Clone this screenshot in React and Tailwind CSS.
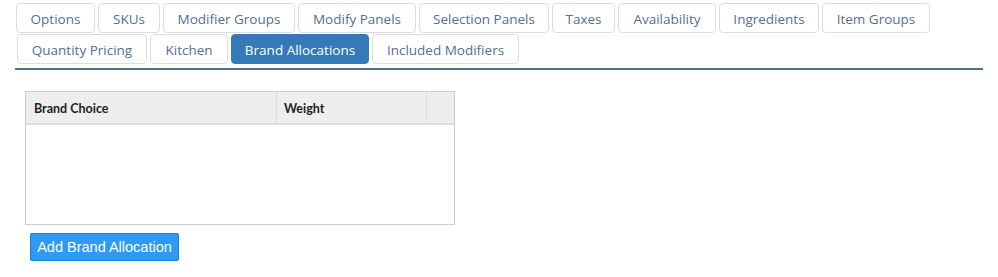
const rowOne = [
  { label: 'Options', w: 'w-[79px]' },
  { label: 'SKUs', w: 'w-[62px]' },
  { label: 'Modifier Groups', w: 'w-[132px]' },
  { label: 'Modify Panels', w: 'w-[118px]' },
  { label: 'Selection Panels', w: 'w-[130px]' },
  { label: 'Taxes', w: 'w-[63px]' },
  { label: 'Availability', w: 'w-[98px]' },
  { label: 'Ingredients', w: 'w-[100px]' },
  { label: 'Item Groups', w: 'w-[108px]' },
];

const rowTwo = [
  { label: 'Quantity Pricing', w: 'w-[130px]' },
  { label: 'Kitchen', w: 'w-[78px]' },
  { label: 'Brand Allocations', w: 'w-[138px]', active: true },
  { label: 'Included Modifiers', w: 'w-[147px]' },
];

function Tab({ tab }) {
  return (
    <div
      className={`${tab.w} h-[30px] pt-[2px] flex items-center justify-center rounded-[4px] border text-[13.5px] whitespace-nowrap ${
        tab.active
          ? 'bg-[#337ab7] border-[#337ab7] text-white'
          : 'bg-white border-[#dddddd] text-[#53708d]'
      }`}
    >
      {tab.label}
    </div>
  );
}

export default function App() {
  return (
    <div className="w-[998px] h-[277px] bg-white font-['Open_Sans',sans-serif]">
      {/* Tabs */}
      <div className="pt-[3px] pl-[16px] pr-[15px]">
        <div className="flex gap-[3px]">
          {rowOne.map(t => <Tab key={t.label} tab={t} />)}
        </div>
        <div className="flex gap-[3px] mt-[1px] pl-[1px]">
          {rowTwo.map(t => <Tab key={t.label} tab={t} />)}
        </div>
        <div className="mt-[4px] -ml-[1px] h-[2px] bg-[#527285]" />
      </div>

      {/* Table */}
      <div className="ml-[25px] mt-[21px] w-[430px] h-[134px] border border-[#cccccc]">
        <div className="flex h-[33px] bg-[#eeeeee] border-b-2 border-[#dddddd] text-[12.5px] font-bold text-[#222] font-['Lato',sans-serif]">
          <div className="w-[251px] border-r border-[#dddddd] flex items-center pl-[8px] pt-[4px]">Brand Choice</div>
          <div className="w-[150px] border-r border-[#dddddd] flex items-center pl-[7px] pt-[4px]">Weight</div>
          <div className="flex-1" />
        </div>
      </div>

      {/* Button */}
      <div className="ml-[30px] mt-[8px]">
        <button className="w-[149px] h-[28px] pt-[1px] rounded-[2px] bg-[#2e9af2] border border-[#1f7fcc] text-white text-[14.5px] font-['Liberation_Sans',Arial,sans-serif] flex items-center justify-center">
          Add Brand Allocation
        </button>
      </div>
    </div>
  );
}
